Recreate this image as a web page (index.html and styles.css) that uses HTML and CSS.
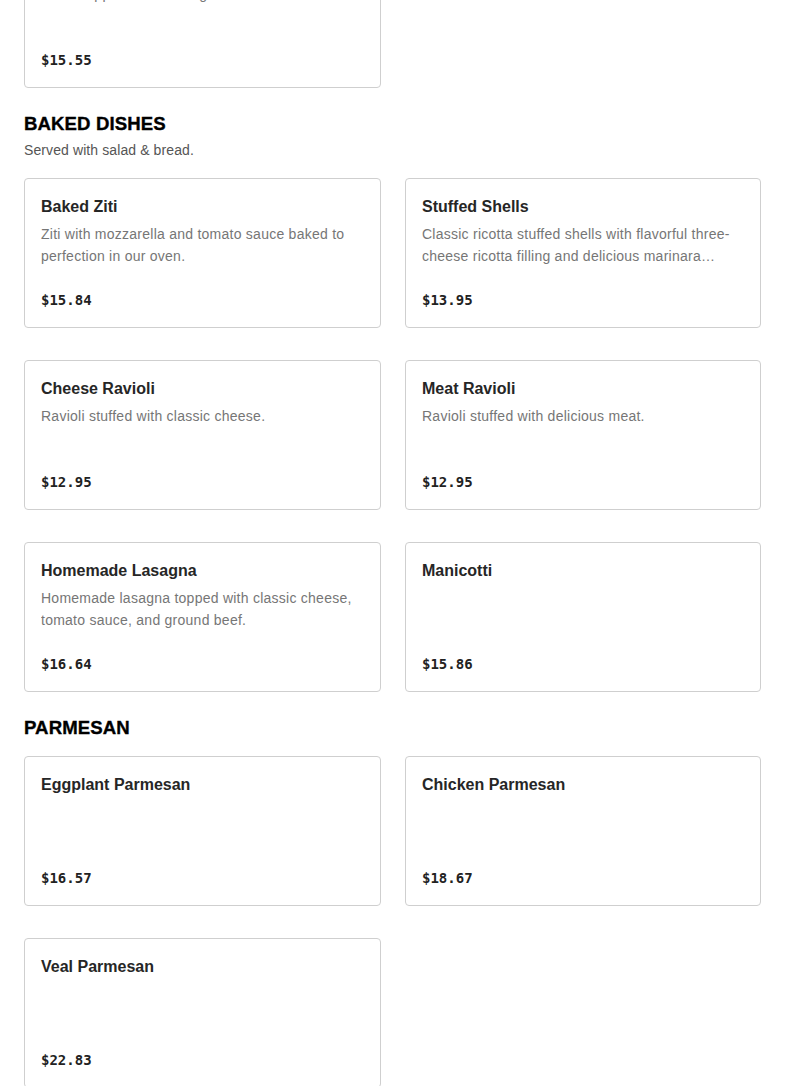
FILE: index.html
```html
<!DOCTYPE html>
<html lang="en">
<head>
<meta charset="utf-8">
<title>Menu</title>
<link rel="stylesheet" href="styles.css">
</head>
<body>
<main class="menu">
  <section class="section section-cut">
    <div class="grid">
      <article class="card">
        <h3 class="card-title">Baked Penne</h3>
        <p class="card-desc">Pasta topped with sausage.</p>
        <p class="card-price">$15.55</p>
      </article>
    </div>
  </section>

  <section class="section">
    <h2 class="section-title">BAKED DISHES</h2>
    <p class="section-sub">Served with salad &amp; bread.</p>
    <div class="grid">
      <article class="card">
        <h3 class="card-title">Baked Ziti</h3>
        <p class="card-desc">Ziti with mozzarella and tomato sauce baked to perfection in our oven.</p>
        <p class="card-price">$15.84</p>
      </article>
      <article class="card">
        <h3 class="card-title">Stuffed Shells</h3>
        <p class="card-desc">Classic ricotta stuffed shells with flavorful three-cheese ricotta filling and delicious marinara sauce.</p>
        <p class="card-price">$13.95</p>
      </article>
      <article class="card">
        <h3 class="card-title">Cheese Ravioli</h3>
        <p class="card-desc">Ravioli stuffed with classic cheese.</p>
        <p class="card-price">$12.95</p>
      </article>
      <article class="card">
        <h3 class="card-title">Meat Ravioli</h3>
        <p class="card-desc">Ravioli stuffed with delicious meat.</p>
        <p class="card-price">$12.95</p>
      </article>
      <article class="card">
        <h3 class="card-title">Homemade Lasagna</h3>
        <p class="card-desc">Homemade lasagna topped with classic cheese, tomato sauce, and ground beef.</p>
        <p class="card-price">$16.64</p>
      </article>
      <article class="card">
        <h3 class="card-title">Manicotti</h3>
        <p class="card-desc"></p>
        <p class="card-price">$15.86</p>
      </article>
    </div>
  </section>

  <section class="section">
    <h2 class="section-title">PARMESAN</h2>
    <div class="grid">
      <article class="card">
        <h3 class="card-title">Eggplant Parmesan</h3>
        <p class="card-desc"></p>
        <p class="card-price">$16.57</p>
      </article>
      <article class="card">
        <h3 class="card-title">Chicken Parmesan</h3>
        <p class="card-desc"></p>
        <p class="card-price">$18.67</p>
      </article>
      <article class="card">
        <h3 class="card-title">Veal Parmesan</h3>
        <p class="card-desc"></p>
        <p class="card-price">$22.83</p>
      </article>
    </div>
  </section>
</main>
</body>
</html>
```

FILE: styles.css
```css
* { box-sizing: border-box; }

html, body {
  margin: 0;
  padding: 0;
  background: #ffffff;
}

body {
  font-family: "Liberation Sans", Arial, sans-serif;
  color: #222222;
  overflow: hidden;
}

.menu {
  padding: 0 24px;
  margin-top: -62px;
}

.section + .section {
  margin-top: 25px;
}

.section-title {
  margin: 0 0 17px;
  font-family: "Liberation Sans", Arial, sans-serif;
  font-weight: 700;
  font-size: 18.6px;
  line-height: 22px;
  color: #000000;
  letter-spacing: 0.1px;
  -webkit-text-stroke: 0.35px #000000;
}

.section-sub {
  margin: -13px 0 17px;
  font-size: 14px;
  line-height: 22px;
  color: #555555;
  letter-spacing: 0.1px;
}

.grid {
  display: grid;
  grid-template-columns: 357px 356px;
  column-gap: 24px;
  row-gap: 32px;
}

.card {
  border: 1px solid #cfcfcf;
  border-radius: 4px;
  padding: 16px 16px 15px;
  height: 150px;
  display: flex;
  flex-direction: column;
}

.card-title {
  margin: 0;
  font-size: 16px;
  line-height: 24px;
  font-weight: 700;
  color: #262626;
}

.card-desc {
  margin: 4px 0 0;
  height: 44px;
  font-size: 14px;
  line-height: 22px;
  letter-spacing: 0.25px;
  color: #767676;
  overflow: hidden;
  display: -webkit-box;
  -webkit-line-clamp: 2;
  -webkit-box-orient: vertical;
}

.card-price {
  margin: 21px 0 0;
  font-family: "DejaVu Sans Mono", "Liberation Mono", monospace;
  font-size: 14px;
  line-height: 24px;
  font-weight: 700;
  color: #222222;
}
```
